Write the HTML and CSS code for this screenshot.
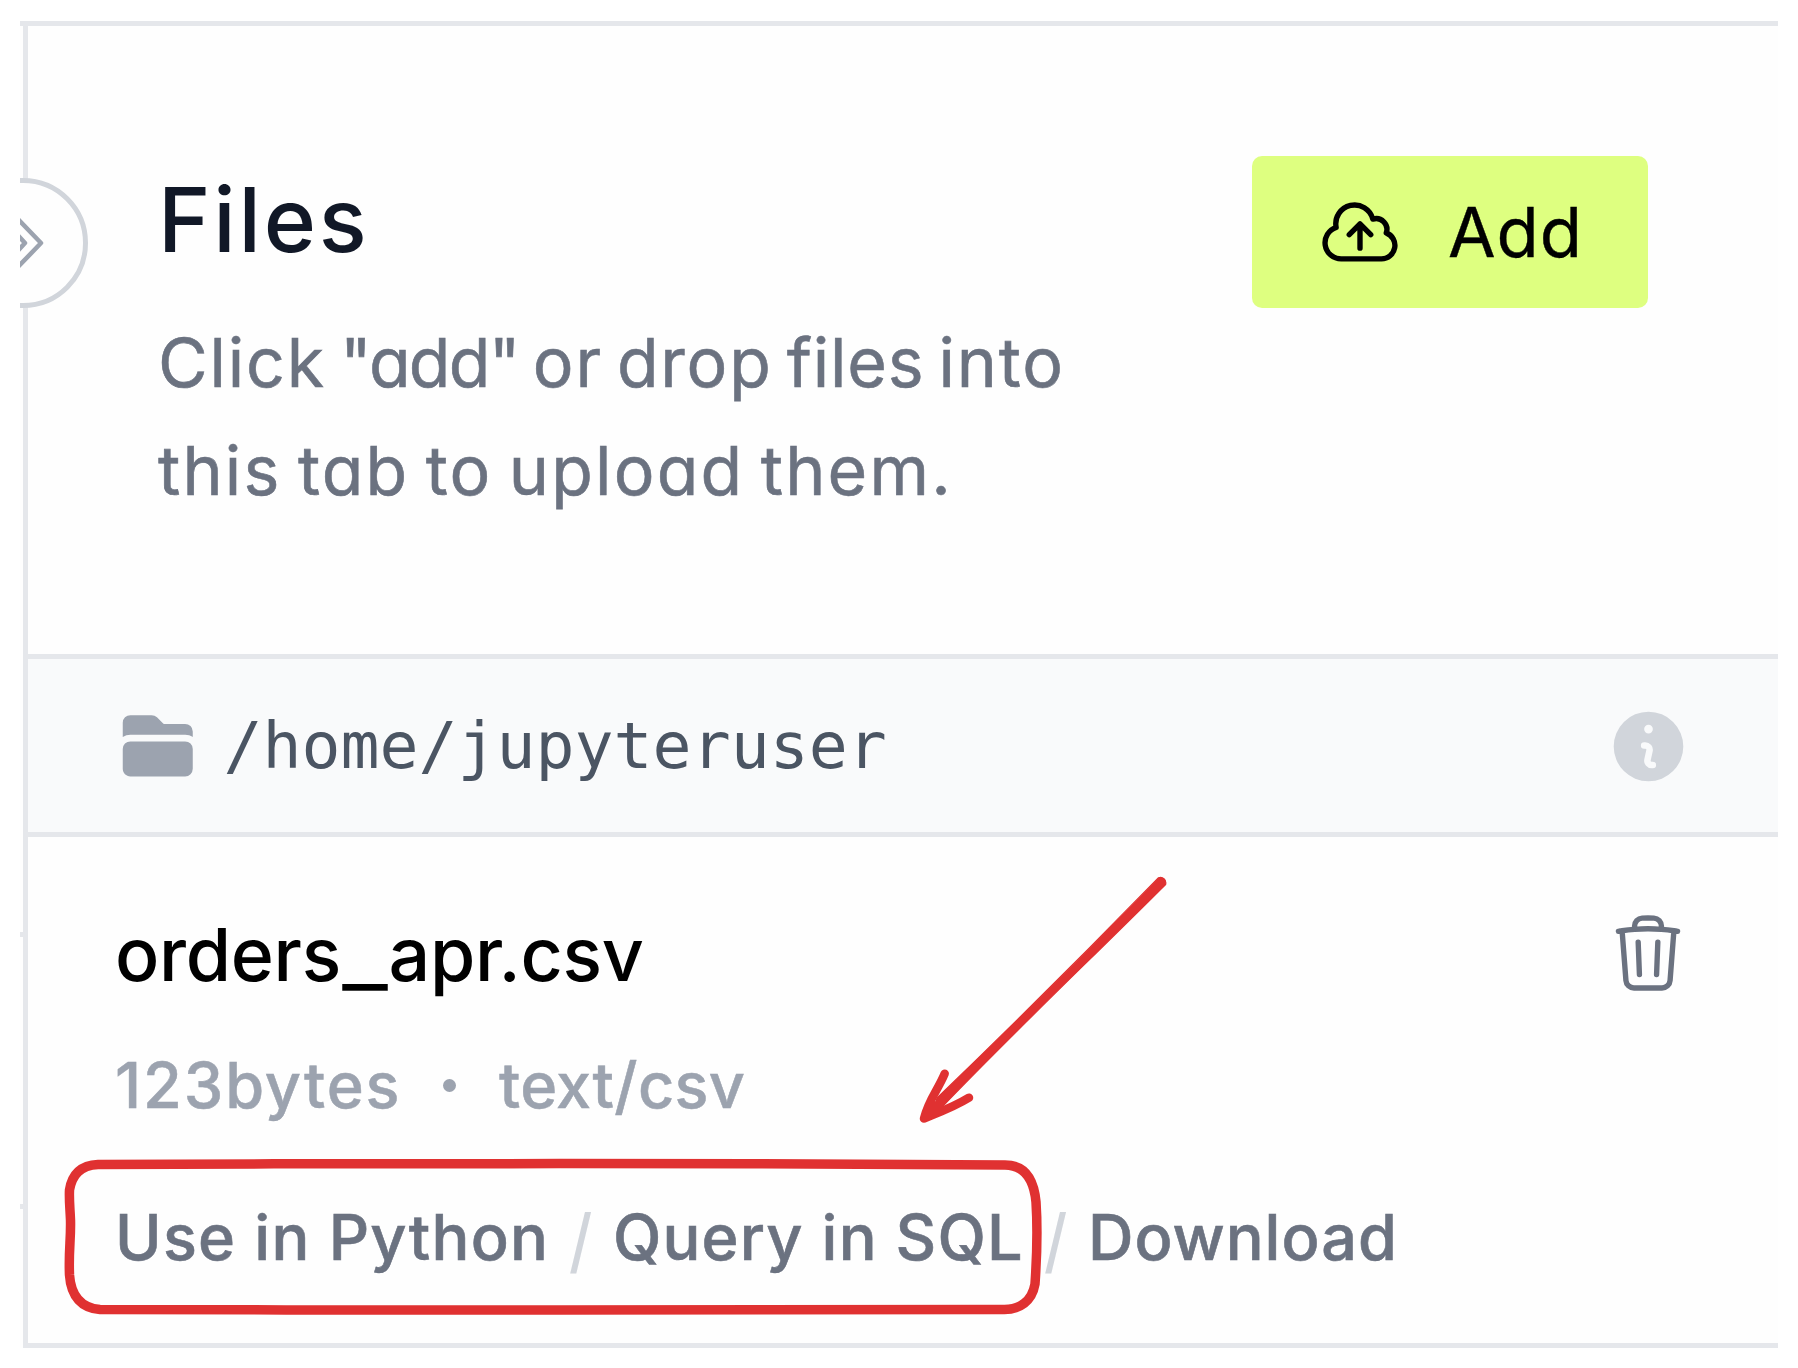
FILE: index.html
```html
<!DOCTYPE html>
<html lang="en">
<head>
<meta charset="utf-8">
<title>Files</title>
<link rel="stylesheet" href="styles.css">
</head>
<body>
<main class="frame">
  <div class="panel">
    <header class="intro">
      <div class="intro-text">
        <h1 class="title">Files</h1>
        <p class="hint"><span class="hint-a">Click <span class="quoted">"add"</span> or drop <span class="tight">files</span> into</span><br><span class="hint-b">this tab to upload them.</span></p>
      </div>
      <button class="add" type="button">
        <svg class="add-icon" viewBox="0 0 24 24" fill="none" stroke="currentColor" stroke-width="1.5" stroke-linecap="round" stroke-linejoin="round"><path d="M12 16.5V9.75m0 0l3 3m-3-3l-3 3M6.75 19.5a4.5 4.5 0 01-1.41-8.775 5.25 5.25 0 0110.233-2.33 3 3 0 013.758 3.848A3.752 3.752 0 0118 19.5H6.75z"/></svg>
        <span class="add-label">Add</span>
      </button>
    </header>
    <div class="path">
      <svg class="path-icon" viewBox="0 0 20 20" fill="currentColor"><path d="M3.75 3A1.75 1.75 0 002 4.75v3.26a3.235 3.235 0 011.75-.51h12.5c.644 0 1.245.188 1.75.51V6.75A1.75 1.75 0 0016.25 5h-4.836a.25.25 0 01-.177-.073L9.823 3.513A1.75 1.75 0 008.586 3H3.75zM3.75 9A1.75 1.75 0 002 10.75v4.5c0 .966.784 1.75 1.75 1.75h12.5A1.75 1.75 0 0018 15.25v-4.5A1.75 1.75 0 0016.25 9H3.75z"/></svg>
      <span class="path-name">/home/jupyteruser</span>
      <svg class="info-icon" viewBox="0 0 20 20" fill="currentColor"><path fill-rule="evenodd" d="M18 10a8 8 0 11-16 0 8 8 0 0116 0zm-7-4a1 1 0 11-2 0 1 1 0 012 0zM9 9a.75.75 0 000 1.5h.253a.25.25 0 01.244.304l-.459 2.066A1.75 1.75 0 0010.747 15H11a.75.75 0 000-1.5h-.253a.25.25 0 01-.244-.304l.459-2.066A1.75 1.75 0 009.253 9H9z"/></svg>
    </div>
    <section class="file">
      <div class="file-body">
        <div class="name">orders<span class="underscore">_</span>apr.csv</div>
        <div class="meta"><span class="size">123bytes</span><span class="dot"></span><span class="type">text/csv</span></div>
        <nav class="links"><a class="python">Use in Python</a><span class="slash">/</span><a class="sql">Query in SQL</a><span class="slash">/</span><a class="download">Download</a></nav>
      </div>
      <svg class="trash" viewBox="0 0 24 24" fill="none" stroke="currentColor" stroke-width="1.5" stroke-linecap="round" stroke-linejoin="round"><path d="M14.74 9l-.346 9m-4.788 0L9.26 9m9.968-3.21c.342.052.682.107 1.022.166m-1.022-.165L18.16 19.673a2.25 2.25 0 01-2.244 2.077H8.084a2.25 2.25 0 01-2.244-2.077L4.772 5.79m14.456 0a48.108 48.108 0 00-3.478-.397m-12 .562c.34-.059.68-.114 1.022-.165m0 0a48.11 48.11 0 013.478-.397m7.5 0v-.916c0-1.18-.91-2.164-2.09-2.201a51.964 51.964 0 00-3.32 0c-1.18.037-2.09 1.022-2.09 2.201v.916m7.5 0a48.667 48.667 0 00-7.5 0"/></svg>
    </section>
  </div>
  <div class="toggle"></div>
  <svg class="chevrons" viewBox="0 0 30 60" fill="none"><path d="M-4 4L21 30L-4 56M-6 18L5 30L-6 42"/></svg>
  <i class="tick tick-a"></i>
  <i class="tick tick-b"></i>
</main>
<svg class="marks" viewBox="0 0 1798 1368" fill="none">
  <path d="M98 1164.6C250 1163.6 420 1163.6 560 1163.6S880 1163.8 1005 1165C1026 1165 1034 1181 1036 1202C1037.500 1225 1037 1255 1035 1284C1032 1301 1020 1310 1003 1309.500C850 1310.500 700 1310 560 1310S250 1310 100 1309.500C82 1308 71 1297 69.500 1275C68.500 1250 71 1240 70.500 1220C70 1208 69 1200 69.500 1190C72 1175 80 1165.500 98 1164.600Z"/>
  <path class="shaft" d="M1158.500 877.700Q1161.500 876.500 1164 878.700T1165.600 884.500C1090 960 1010 1036 943 1106L934 1108L937 1098C1020 1018 1090 948 1158.500 877.700Z"/>
  <path class="wing" d="M944.700 1073.700C938 1090 929 1099 924 1118.500C940 1112 954 1107 969 1097.700M924 1118.500L942 1101"/>
</svg>
</body>
</html>
```
FILE: styles.css
```css
* { box-sizing: border-box; }
body {
  margin: 0;
  width: 1798px;
  height: 1368px;
  overflow: hidden;
  background: #fff;
  font-family: Inter, "Liberation Sans", sans-serif;
  position: relative;
}
svg { display: block; flex: none; }
h1, p { margin: 0; }

.frame {
  position: relative;
  width: 1758px;
  height: 1327px;
  margin: 0 20px;
  top: 21px;
  overflow: hidden;
  border-top: 5px solid #e5e7eb;
  padding-left: 3px;
  background: #fefefe;
}
.panel {
  height: 1322px;
  border-left: 5px solid #e5e7eb;
  border-bottom: 5px solid #e5e7eb;
  display: grid;
  grid-template-rows: 628px 183px 1fr;
}

.intro {
  display: flex;
  justify-content: space-between;
  align-items: flex-start;
  padding: 130px 130px 0 130px;
}
.intro-text { padding-top: 14px; white-space: nowrap; }
.title {
  font-size: 89px;
  line-height: 100px;
  font-weight: 500;
  letter-spacing: 2.8px;
  color: #111827;
}
.hint {
  margin-top: 38px;
  font-size: 68px;
  line-height: 108px;
  color: #6b7280;
  font-feature-settings: "cv11";
  -webkit-text-stroke: .6px #6b7280;
}
.hint-a { letter-spacing: 1.8px; word-spacing: -6.8px; }
.quoted { letter-spacing: -1.7px; }
.tight { letter-spacing: .8px; }
.hint-b { letter-spacing: 2.2px; word-spacing: -5px; }
.add {
  width: 396px;
  height: 152px;
  border: 0;
  border-radius: 10px;
  background: #deff80;
  color: #000;
  padding: 0 0 0 65px;
  display: flex;
  align-items: center;
  gap: 45px;
  font: 400 69px/80px Inter, sans-serif;
  letter-spacing: 1px;
  -webkit-text-stroke: .4px #000;
}
.add-icon { width: 86px; height: 86px; }
.add-label { padding-bottom: 1px; }

.path {
  border-top: 5px solid #e5e7eb;
  border-bottom: 5px solid #e5e7eb;
  background: #f9fafb;
  display: flex;
  align-items: center;
  padding: 1px 86px 0;
}
.path-icon { width: 87.5px; height: 87.5px; color: #9ca3af; }
.path-name {
  margin-left: 22px;
  font: 64.8px/76px "DejaVu Sans Mono", monospace;
  color: #4b5563;
  flex: 1;
}
.info-icon { width: 87px; height: 87px; color: #d1d5db; }

.file {
  display: flex;
  justify-content: space-between;
  padding: 73px 87px 0 87px;
  font-weight: 500;
  white-space: nowrap;
}
.name { font-size: 73.4px; line-height: 90px; letter-spacing: -.3px; color: #000; }
.underscore { display: inline-block; margin: 0 7px; transform: translateY(3px) scaleX(1.34); }
.meta {
  margin-top: 45px;
  height: 80px;
  display: grid;
  grid-template-columns: 328px 56px 1fr;
  align-items: center;
  font-size: 63px;
  line-height: 80px;
  color: #9ca3af;
  -webkit-text-stroke: .5px #9ca3af;
}
.size { letter-spacing: 1.9px; }
.type { letter-spacing: .3px; }
.dot { width: 13px; height: 13px; border-radius: 50%; background: #9ca3af; }
.links {
  margin-top: 72px;
  display: grid;
  grid-template-columns: 454px 44px 431px 44px 1fr;
  font-size: 63px;
  line-height: 80px;
  color: #6b7280;
}
.links a { -webkit-text-stroke: .6px #6b7280; }
.python { letter-spacing: 1.25px; }
.sql { letter-spacing: 1.15px; }
.download { letter-spacing: 1px; }
.slash { color: #d1d5db; transform: scaleY(1.12); transform-origin: 0 14px; }
.trash { width: 86px; height: 86px; color: #6b7280; }

.toggle {
  position: absolute;
  left: -62px;
  top: 151.500px;
  width: 130px;
  height: 130px;
  border: 5px solid #d1d5db;
  border-radius: 50%;
  background: #fefefe;
}
.chevrons { position: absolute; left: 0; top: 187px; width: 30px; height: 60px; }
.chevrons path { stroke: #9ca3af; stroke-width: 4.500; stroke-linecap: round; stroke-linejoin: round; }
.tick { position: absolute; left: 0; width: 3px; height: 5px; background: #e5e7eb; }
.tick-a { top: 906px; }
.tick-b { top: 1178px; }

.marks { position: absolute; left: 0; top: 0; width: 1798px; height: 1368px; }
.marks path { stroke: #e03131; stroke-width: 9.500; stroke-linecap: round; stroke-linejoin: round; }
.marks .shaft { fill: #e03131; stroke-width: 1.200; }
.marks .wing { stroke-width: 8.500; }
```
